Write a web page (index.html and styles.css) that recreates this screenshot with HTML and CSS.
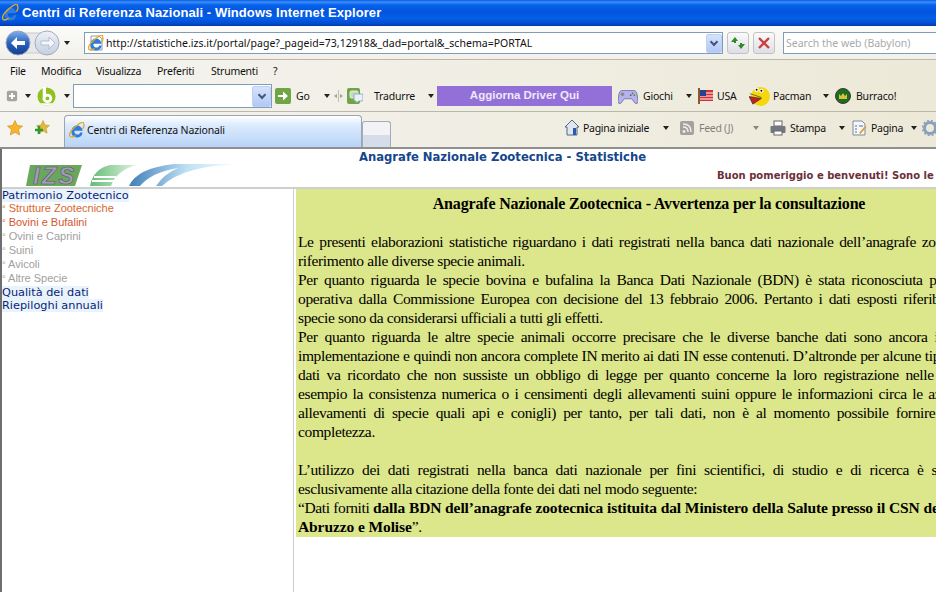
FILE: index.html
```html
<!DOCTYPE html>
<html lang="it">
<head>
<meta charset="utf-8">
<title>Centri di Referenza Nazionali</title>
<link rel="stylesheet" href="styles.css">
</head>
<body>
<div class="window">
  <header class="titlebar">
    <svg class="ie big" viewBox="0 0 20 20"><use href="#ie"/></svg>
    <span>Centri di Referenza Nazionali - Windows Internet Explorer</span>
  </header>

  <div class="addressrow">
    <div class="navgroup">
      <svg class="navball" width="58" height="30" viewBox="0 0 58 30">
        <defs>
          <linearGradient id="gloss" x1="0" x2="0" y1="0" y2="1"><stop offset="0" stop-color="#7fb0ec"/><stop offset=".5" stop-color="#2a62bd"/><stop offset="1" stop-color="#123c8f"/></linearGradient>
          <linearGradient id="glossoff" x1="0" x2="0" y1="0" y2="1"><stop offset="0" stop-color="#eef1f7"/><stop offset="1" stop-color="#c3cfe4"/></linearGradient>
        </defs>
        <rect x="10" y="5" width="42" height="20" rx="10" fill="#e6e8ec" stroke="#c6c8cc"/>
        <circle cx="14" cy="15" r="12" fill="url(#gloss)" stroke="#9aa6bc"/>
        <path d="M7 15l6-6v4h8v4h-8v4z" fill="#fff"/>
        <circle cx="43" cy="15" r="12" fill="url(#glossoff)" stroke="#a7adba"/>
        <path d="M51 15l-6-6v4h-8v4h8v4z" fill="#f4f6fa" stroke="#9fa9bd" stroke-width=".7"/>
      </svg>
      <i class="caret"></i>
    </div>
    <div class="urlbox">
      <svg class="doc" viewBox="0 0 16 16"><path d="M3 1h8l3 3v11H3z" fill="#fff" stroke="#9a9a9a"/><use href="#ie"/></svg>
      <span class="url">http://statistiche.izs.it/portal/page?_pageid=73,12918&amp;_dad=portal&amp;_schema=PORTAL</span>
      <span class="combo small"><i class="chev"></i></span>
    </div>
    <button class="squarebtn" aria-label="Aggiorna">
      <svg viewBox="0 0 16 16"><path d="M1 7l4-5 3 4H6v2H4V7zM15 9l-4 5-3-4h2V8h2v1z" fill="#2f8a25"/></svg>
    </button>
    <button class="squarebtn" aria-label="Interrompi">
      <svg viewBox="0 0 16 16"><path d="M3 3l10 10M13 3L3 13" stroke="#c9423c" stroke-width="2.4"/></svg>
    </button>
    <div class="searchbox">Search the web (Babylon)</div>
  </div>

  <nav class="menubar">
    <span class="m1">File</span><span class="m2">Modifica</span><span class="m3">Visualizza</span><span class="m4">Preferiti</span><span class="m5">Strumenti</span><span>?</span>
  </nav>

  <div class="toolbar">
    <svg class="ico14" viewBox="0 0 14 14"><rect x="1" y="1" width="12" height="12" rx="2" fill="#a5a59b"/><path d="M7 3.500v7M3.500 7h7" stroke="#fff" stroke-width="2.200"/></svg>
    <i class="caret t1"></i>
    <svg class="babylon" viewBox="0 0 20 20"><circle cx="10" cy="10" r="9.500" fill="#8fc21f"/><circle cx="11" cy="12" r="5" fill="#fff"/><rect x="6" y="0" width="3.500" height="14" fill="#fff"/><circle cx="11" cy="12" r="2" fill="#8fc21f"/><path d="M3 17q7 5 14 0z" fill="#fff"/></svg>
    <i class="caret t2"></i>
    <div class="tsearch"><span class="combo big"><i class="chev"></i></span></div>
    <svg class="ico16 go" viewBox="0 0 16 16"><rect width="16" height="16" rx="2" fill="#6fa545"/><path d="M3 7h5V3.500L13 8l-5 4.500V9H3z" fill="#fff"/></svg>
    <span class="tlabel l-go">Go</span>
    <i class="caret t3"></i>
    <svg class="sep" viewBox="0 0 12 16"><path d="M4 5v6L0 8zM8 5v6l4-3z" fill="#a6a69c"/><path d="M6 0v16" stroke="#b8ad98"/></svg>
    <svg class="ico16 trad" viewBox="0 0 16 16"><rect width="13" height="16" rx="2" fill="#6fa545"/><rect x="3" y="3" width="8" height="7" rx="1.500" fill="#c8d8c0" stroke="#fff" stroke-width=".8"/><path d="M8 6h7a1 1 0 0 1 1 1v5a1 1 0 0 1-1 1h-3l-3 2v-2H8a1 1 0 0 1-1-1V7a1 1 0 0 1 1-1z" fill="#e8f0f8" stroke="#7f9fb0" stroke-width=".8"/></svg>
    <span class="tlabel l-trad">Tradurre</span>
    <i class="caret t4"></i>
    <div class="promo">Aggiorna Driver Qui</div>
    <svg class="gamepad" viewBox="0 0 22 17"><path d="M4 2h14q2 0 3 4l1 8q0 3-3 2l-4-5H7l-4 5q-3 1-3-2l1-8q1-4 3-4z" fill="#b4b4ea" stroke="#7474b0"/><circle cx="5" cy="6" r="2" fill="#888"/><circle cx="16" cy="5" r="1" fill="#d33"/><circle cx="18" cy="7" r="1" fill="#2a2"/><circle cx="14" cy="7" r="1" fill="#36c"/></svg>
    <span class="tlabel l-giochi">Giochi</span>
    <i class="caret t5"></i>
    <svg class="flag" viewBox="0 0 15 16"><rect x="0" y="0" width="2" height="16" fill="#8a5a2a"/><rect x="2" y="2" width="13" height="11" fill="#d22f35"/><path d="M2 5h13M2 8h13M2 11h13" stroke="#fff" stroke-width="1.200"/><rect x="2" y="2" width="6" height="6" fill="#27408f"/></svg>
    <span class="tlabel l-usa">USA</span>
    <svg class="pac" viewBox="0 0 22 22"><circle cx="12" cy="11" r="10" fill="#f6d70f"/><path d="M0 11l13 2-9 6z" fill="#c52020" stroke="#222" stroke-width=".6"/><path d="M1 8l12 4" stroke="#222" stroke-width=".6"/><circle cx="8" cy="4" r="2.200" fill="#fff"/><circle cx="13" cy="5" r="2.200" fill="#fff"/><circle cx="8" cy="4" r="1"/><circle cx="13" cy="5" r="1"/></svg>
    <span class="tlabel l-pac">Pacman</span>
    <i class="caret t6"></i>
    <svg class="burr" viewBox="0 0 16 16"><circle cx="8" cy="8" r="7.500" fill="#1e6b24" stroke="#3a3a2a"/><path d="M4 11V6l2 2 2-3 2 3 2-2v5z" fill="#d9c23a"/></svg>
    <span class="tlabel l-burr">Burraco!</span>
  </div>

  <div class="tabrow">
    <svg class="star" viewBox="0 0 16 16"><path d="M8 .5l2.300 5 5.200.6-3.900 3.500 1.100 5.400L8 12.300l-4.700 2.700 1.100-5.400L.5 6.100l5.200-.6z" fill="#f6b52c" stroke="#c88a16" stroke-width=".6"/></svg>
    <svg class="star add" viewBox="0 0 16 16"><path d="M9 .5l2 4.500 4.500.5-3.400 3 1 4.700-4.100-2.300-4 2.300 1-4.700-3.400-3 4.500-.5z" fill="#e6b93c" stroke="#b58a20" stroke-width=".5"/><path d="M5 6v8M1 10h8" stroke="#2f9a2a" stroke-width="2.600"/></svg>
    <div class="tab">
      <svg class="ie" viewBox="0 0 20 20"><use href="#ie"/></svg>
      <span>Centri di Referenza Nazionali</span>
    </div>
    <div class="newtab"></div>
    <div class="cmds">
      <svg class="cmd c-home" viewBox="0 0 16 17"><path d="M1 8l7-7 7 7-2 0v8H3V8z" fill="#dfe6f0" stroke="#51698a"/><rect x="9" y="9" width="3" height="7" fill="#2b5aa8"/></svg>
      <span class="clabel c1">Pagina iniziale</span><i class="caret c-a"></i>
      <svg class="cmd c-feed" viewBox="0 0 14 14"><rect width="14" height="14" rx="2" fill="#a3a39b"/><circle cx="4" cy="10.500" r="1.400" fill="#eee"/><path d="M3 6q5 0 5 5M3 3q8 0 8 8" fill="none" stroke="#eee" stroke-width="1.500"/></svg>
      <span class="clabel c2 off">Feed (J)</span><i class="caret c-b off"></i>
      <svg class="cmd c-print" viewBox="0 0 16 16"><rect x="4" y="1" width="8" height="5" fill="#fff" stroke="#666"/><rect x="0.500" y="6" width="15" height="7" rx="1" fill="#737880"/><rect x="4" y="11" width="8" height="4" fill="#fff" stroke="#666"/></svg>
      <span class="clabel c3">Stampa</span><i class="caret c-c"></i>
      <svg class="cmd c-page" viewBox="0 0 15 16"><path d="M1 1h9l3 3v11H1z" fill="#f4f6fb" stroke="#7c8aa0"/><path d="M3 6h2M3 9h2M3 12h2M7 6h4" stroke="#58708f"/><path d="M7 13l6-7 1.500 1-6 7z" fill="#d9a23c"/></svg>
      <span class="clabel c4">Pagina</span><i class="caret c-d"></i>
      <svg class="cmd c-gear" viewBox="0 0 16 16"><circle cx="8" cy="8" r="5.500" fill="none" stroke="#8aa0b8" stroke-width="3"/><circle cx="8" cy="8" r="7.500" fill="none" stroke="#8aa0b8" stroke-width="1.500" stroke-dasharray="2 2"/></svg>
    </div>
  </div>

  <main class="page">
    <div class="banner">
      <div class="logo">
        <svg width="230" height="23" viewBox="0 0 230 23">
          <defs>
            <linearGradient id="fade" x1="0" x2="1"><stop offset="0" stop-color="#3f7fb8"/><stop offset=".5" stop-color="#bfe0f4"/><stop offset="1" stop-color="#fff"/></linearGradient>
            <linearGradient id="fadeg" x1="0" x2="1"><stop offset="0" stop-color="#63bb74"/><stop offset="1" stop-color="#dff2e0"/></linearGradient>
          </defs>
          <path d="M2 22L6 1h52l-7 21z" fill="#69a85c"/>
          <text x="9" y="20" class="izs">IZS</text>
          <path d="M66 22q3-17 20-21h26q-20 6-25 21z" fill="url(#fadeg)"/>
          <path d="M70 13h22M68 17h22" stroke="#fff" stroke-width="2"/>
          <path d="M105 22q8-18 45-22h70q-60 1-82 22h-6q8-12 22-18-26 4-38 18z" fill="url(#fade)"/>
        </svg>
      </div>
      <h1 class="apptitle">Anagrafe Nazionale Zootecnica - Statistiche</h1>
      <p class="greeting">Buon pomeriggio e benvenuti! Sono le 15:30</p>
    </div>
    <div class="columns">
      <aside class="sidebar">
        <a class="top">Patrimonio Zootecnico</a>
        <a class="sub hot"><b>°</b> Strutture Zootecniche</a>
        <a class="sub hot2"><b>°</b> Bovini e Bufalini</a>
        <a class="sub"><b>°</b> Ovini e Caprini</a>
        <a class="sub"><b>°</b> Suini</a>
        <a class="sub"><b>°</b> Avicoli</a>
        <a class="sub"><b>°</b> Altre Specie</a>
        <a class="top">Qualità dei dati</a>
        <a class="top">Riepiloghi annuali</a>
      </aside>
      <article class="notice">
        <h2>Anagrafe Nazionale Zootecnica - Avvertenza per la consultazione</h2>
        <p class="ws22">Le presenti elaborazioni statistiche riguardano i dati registrati nella banca dati nazionale dell’anagrafe zootecnica in</p>
        <p>riferimento alle diverse specie animali.</p>
        <p class="ws3">Per quanto riguarda le specie bovina e bufalina la Banca Dati Nazionale (BDN) è stata riconosciuta pienamente</p>
        <p class="ws27">operativa dalla Commissione Europea con decisione del 13 febbraio 2006. Pertanto i dati esposti riferibili a tali</p>
        <p>specie sono da considerarsi ufficiali a tutti gli effetti.</p>
        <p class="ws35">Per quanto riguarda le altre specie animali occorre precisare che le diverse banche dati sono ancora in fase di</p>
        <p class="ws04">implementazione e quindi non ancora complete IN merito ai dati IN esse contenuti. D’altronde per alcune tipologie di</p>
        <p class="ws33">dati va ricordato che non sussiste un obbligo di legge per quanto concerne la loro registrazione nelle BDN (ad</p>
        <p class="ws2">esempio la consistenza numerica o i censimenti degli allevamenti suini oppure le informazioni circa le aziende e gli</p>
        <p class="ws37">allevamenti di specie quali api e conigli) per tanto, per tali dati, non è al momento possibile fornire garanzie di</p>
        <p>completezza.</p>
        <p>&nbsp;</p>
        <p class="ws45">L’utilizzo dei dati registrati nella banca dati nazionale per fini scientifici, di studio e di ricerca è subordinato</p>
        <p>esclusivamente alla citazione della fonte dei dati nel modo seguente:</p>
        <p>“Dati forniti <b>dalla BDN dell’anagrafe zootecnica istituita dal Ministero della Salute presso il CSN dell’IZS</b></p>
        <p><b>Abruzzo e Molise</b>”.</p>
      </article>
    </div>
  </main>
</div>
<svg class="defs" width="0" height="0">
  <symbol id="ie" viewBox="0 0 20 20">
    <path d="M3 12a7 7 0 0 1 14-1H7a3.500 3.500 0 0 0 7 2h3a7 7 0 0 1-14-1z" fill="#2f7bd8"/>
    <path d="M1 18Q-1 13 9 5t9-3q2 2-1 7" fill="none" stroke="#e0a82a" stroke-width="1.600"/>
    <path d="M1 18q2 2 7-1" fill="none" stroke="#e0a82a" stroke-width="1.600"/>
  </symbol>
</svg>
</body>
</html>
```
FILE: styles.css
```css
* { box-sizing: border-box; }
html, body { margin: 0; padding: 0; }
body { width: 936px; height: 592px; overflow: hidden; font-family: "Noto Sans", sans-serif; background: #fff; }
.defs { display: block; height: 0; }
.window { width: 936px; height: 592px; display: flex; flex-direction: column; overflow: hidden; }

.titlebar { height: 26px; flex: none; display: flex; align-items: center; gap: 3px; padding: 0 0 1px 2px; background: linear-gradient(#0a5be0 0, #3a8efc 2px, #0662ea 5px, #0353dd 12px, #0460ea 18px, #0349cc 24px, #0038a8 26px); color: #fff; font: bold 13px "Liberation Sans", sans-serif; letter-spacing: .07px; white-space: nowrap; }
.ie { width: 16px; height: 16px; flex: none; }
.ie.big { width: 17px; height: 17px; }

.addressrow { height: 34px; flex: none; display: flex; align-items: center; background: linear-gradient(#fbfbfa, #f1f0ea); border-bottom: 1px solid #b9b8aa; padding: 1px 0 0 3px; }
.navgroup { width: 78px; flex: none; display: flex; align-items: center; }
.navball { margin-left: 1px; flex: none; }
.caret { display: inline-block; width: 0; height: 0; border: 3.500px solid transparent; border-top: 4px solid #222; border-bottom: 0; flex: none; }
.navgroup .caret { margin-left: 2px; }
.urlbox { width: 639px; height: 22px; flex: none; border: 1px solid #7f9db9; background: #fff; display: flex; align-items: center; padding-left: 3px; font: 10.500px "Noto Sans", sans-serif; letter-spacing: .03px; color: #111; white-space: nowrap; overflow: hidden; margin-left: 3px; }
.doc { width: 16px; height: 16px; flex: none; margin-right: 2px; }
.url { flex: 1; }
.combo { flex: none; display: flex; align-items: center; justify-content: center; background: linear-gradient(#d6e2fb, #b2c8f5); border: 1px solid #bcd0f5; border-radius: 2px; }
.combo.small { width: 16px; height: 19px; }
.combo.big { width: 19px; height: 21px; margin-left: auto; }
.chev { width: 6px; height: 6px; border-right: 2px solid #42587f; border-bottom: 2px solid #42587f; transform: translateY(-1px) rotate(45deg); }
.squarebtn { width: 22px; height: 22px; flex: none; margin-left: 4px; padding: 2px; background: linear-gradient(#fafafa, #dedfe6); border: 1px solid #c3c3c6; border-radius: 3px; }
.squarebtn svg { display: block; width: 16px; height: 16px; }
.searchbox { flex: none; margin-left: 8px; width: 200px; height: 22px; border: 1px solid #7f9db9; background: #fff; color: #aaa; font: 10.500px "Noto Sans", sans-serif; line-height: 20px; padding-left: 2px; white-space: nowrap; }

.menubar { height: 24px; flex: none; display: flex; align-items: center; padding: 0 0 2px 10px; background: linear-gradient(90deg, #f5f4f0, #ece9d8); font: 10.500px "Noto Sans", sans-serif; letter-spacing: -.25px; color: #111; }
.m1 { width: 31px; }
.m2 { width: 55px; }
.m3 { width: 61px; }
.m4 { width: 54px; }
.m5 { width: 62px; }

.toolbar { height: 28px; flex: none; display: flex; align-items: center; background: linear-gradient(90deg, #f5f4f0, #ece9d8); font: 10.500px "Noto Sans", sans-serif; letter-spacing: -.2px; color: #111; white-space: nowrap; padding: 0 0 3px 6px; border-bottom: 1px solid #b9b8aa; }
.ico14 { width: 12px; height: 12px; flex: none; }
.caret.t1 { margin-left: 7px; }
.babylon { width: 19px; height: 19px; margin-left: 6px; flex: none; }
.caret.t2 { margin-left: 8px; }
.tsearch { width: 199px; height: 24px; margin-left: 3px; flex: none; border: 1px solid #7f9db9; background: #fff; display: flex; align-items: center; }
.ico16 { width: 16px; height: 16px; flex: none; }
.go { margin-left: 3px; }
.tlabel { flex: none; }
.l-go { margin-left: 5px; width: 16px; }
.caret.t3 { margin-left: 12px; }
.sep { width: 9px; height: 18px; margin-left: 4px; flex: none; }
.trad { margin-left: 4px; }
.l-trad { margin-left: 11px; width: 42px; }
.caret.t4 { margin-left: 12px; }
.promo { width: 175px; height: 20px; margin-left: 3px; flex: none; background: #9370d8; color: #eee8fa; font: bold 11.500px "Liberation Sans", sans-serif; letter-spacing: 0; text-align: center; line-height: 19px; }
.gamepad { width: 20px; height: 17px; margin-left: 6px; flex: none; }
.l-giochi { margin-left: 5px; width: 29px; }
.caret.t5 { margin-left: 14px; }
.flag { width: 15px; height: 16px; margin-left: 6px; flex: none; }
.l-usa { margin-left: 4px; width: 27px; }
.pac { width: 21px; height: 21px; margin-left: 5px; flex: none; }
.l-pac { margin-left: 3px; width: 38px; }
.caret.t6 { margin-left: 12px; }
.burr { width: 16px; height: 16px; margin-left: 6px; flex: none; }
.l-burr { margin-left: 5px; }

.tabrow { height: 37px; flex: none; display: flex; align-items: flex-end; background: linear-gradient(90deg, #f5f4f0, #ece9d8); padding-left: 7px; border-bottom: 2px solid #8f8f8f; }
.star { width: 16px; height: 16px; flex: none; align-self: center; margin-bottom: 4px; }
.star.add { margin-left: 11px; }
.tab { width: 298px; height: 32px; flex: none; margin-left: 14px; background: linear-gradient(#fff, #dcebfd 30%, #b8d3f8); border: 1px solid #9ca4b0; border-bottom: 0; border-radius: 4px 4px 0 0; display: flex; align-items: center; gap: 2px; padding: 0 0 4px 4px; font: 10.500px "Noto Sans", sans-serif; letter-spacing: -.15px; color: #111; white-space: nowrap; }
.newtab { width: 29px; height: 26px; flex: none; background: linear-gradient(#f3f3f6 50%, #d5dcea 50%); border: 1px solid #a5abb8; border-bottom: 0; border-radius: 3px 3px 0 0; }
.cmds { flex: none; display: flex; align-items: center; align-self: center; margin: 0 0 4px 173px; font: 10.500px "Noto Sans", sans-serif; letter-spacing: -.3px; color: #111; white-space: nowrap; }
.cmd { flex: none; }
.off { opacity: .5; }
.c-home { width: 16px; height: 17px; }
.c1 { margin-left: 3px; width: 66px; }
.caret.c-a { margin-left: 14px; }
.c-feed { width: 14px; height: 14px; margin-left: 11px; }
.c2 { margin-left: 5px; width: 40px; }
.caret.c-b { margin-left: 14px; }
.c-print { width: 16px; height: 16px; margin-left: 11px; }
.c3 { margin-left: 4px; width: 37px; }
.caret.c-c { margin-left: 12px; }
.c-page { width: 15px; height: 16px; margin-left: 7px; }
.c4 { margin-left: 4px; width: 33px; }
.caret.c-d { margin-left: 7px; }
.c-gear { width: 16px; height: 16px; margin-left: 5px; }

.page { flex: 1; min-height: 0; border-left: 2px solid #6f6f6f; background: #fff; display: flex; flex-direction: column; }
.banner { height: 40px; flex: none; position: relative; border-bottom: 2px solid #cfcfcf; }
.logo { position: absolute; left: 22px; bottom: 0; height: 23px; }
.logo svg { display: block; }
.izs { font: italic bold 24px "Liberation Sans", sans-serif; fill: #a49cb4; stroke: #5b5270; stroke-width: .6px; letter-spacing: 2px; }
.apptitle { margin: 0; position: absolute; left: 357px; top: 1px; font: bold 11.600px "DejaVu Sans", sans-serif; color: #14468c; white-space: nowrap; }
.greeting { margin: 0; position: absolute; left: 715px; top: 21px; font: bold 10px "DejaVu Sans", sans-serif; color: #6b2f3a; white-space: nowrap; }

.columns { flex: 1; min-height: 0; display: flex; }
.sidebar { width: 292px; flex: none; border-right: 1px solid #cfcfcf; display: flex; flex-direction: column; align-items: flex-start; }
.top { font: 11.300px "DejaVu Sans", sans-serif; color: #0a1e78; background: #e8f3fc; line-height: 13px; height: 13px; white-space: nowrap; }
.sub { font: 11px "Liberation Sans", sans-serif; color: #a0a0a0; line-height: 13px; height: 14px; white-space: nowrap; }
.sub b { font-weight: normal; font-size: 9px; }
.sub.hot { color: #d9662f; }
.sub.hot2 { color: #d4552f; }
.notice { width: 720px; flex: none; margin: 0 0 0 2px; height: 348px; background: #dce68a; padding: 0 0 0 2px; font: 15.500px/19px "Liberation Serif", serif; letter-spacing: -.37px; color: #000; white-space: nowrap; overflow: hidden; }
.notice h2 { margin: 0; padding: 6px 0 19px; font: bold 16px/18px "Liberation Serif", serif; letter-spacing: -.17px; text-align: center; width: 702px; }
.notice p { margin: 0; }
.notice b { letter-spacing: -.1px; }
.ws04 { word-spacing: .400px; }
.ws2 { word-spacing: 2px; }
.ws22 { word-spacing: 2.200px; }
.ws27 { word-spacing: 2.700px; }
.ws3 { word-spacing: 3px; }
.ws33 { word-spacing: 3.300px; }
.ws35 { word-spacing: 3.500px; }
.ws37 { word-spacing: 3.700px; }
.ws45 { word-spacing: 4.500px; }
```
